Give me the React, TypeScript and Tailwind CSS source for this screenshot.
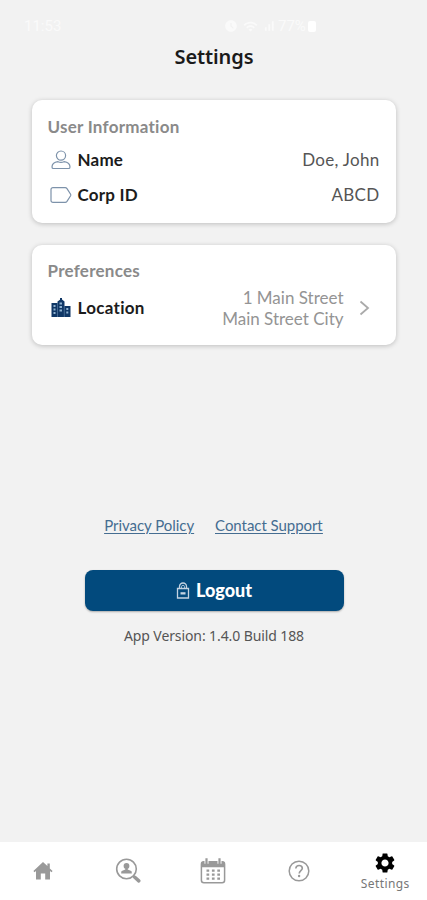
import type { ReactNode } from "react";
import { MdAccessTimeFilled, MdSettings, MdWifi, MdSignalCellularAlt } from "react-icons/md";

const UserIcon = () => (
  <svg width="22" height="22" viewBox="0 0 22 22" fill="none" stroke="#7d92aa" strokeWidth="1.2">
    <circle cx="11" cy="6.6" r="4.6" />
    <path d="M8 12.700c-3.700.6-6 2.300-6 5.200 0 1 .6 1.600 1.500 1.600h15c.9 0 1.500-.6 1.500-1.600 0-2.900-2.300-4.600-6-5.200-2 .9-4 .9-6 0Z" />
  </svg>
);

const TagIcon = () => (
  <svg width="22" height="22" viewBox="0 0 22 22" fill="none" stroke="#7d92aa" strokeWidth="1.2">
    <path d="M3 3.600h12.200c.8 0 1.300.3 1.800 1l3.600 5.600c.3.500.3 1 0 1.500L17 17.400c-.5.700-1 1-1.800 1H3c-1.200 0-2-.8-2-2V5.600c0-1.200.8-2 2-2Z" />
  </svg>
);

const BuildingIcon = () => (
  <svg width="22" height="22" viewBox="0 0 22 22">
    <path d="M1.500 6h6V4.500L10 2.800V1h2v1.500L14.500 4.500V9h6v11h-19V6Z" fill="#103766" />
    <path
      d="M3.500 9h2M3.500 12.500h2M3.500 16h2M9.500 6.500h2.500M9.500 10h2.500M9.500 13.500h2.500M16.300 12h2M16.300 15.500h2"
      stroke="#8fb2d0"
      strokeWidth="1.800"
    />
    <path d="M7.500 6v14M14.300 9v11" stroke="#6486ad" strokeWidth=".6" />
  </svg>
);

const LockIcon = () => (
  <svg width="14" height="18" viewBox="0 0 14 18" fill="none" stroke="#c3d3e2" strokeWidth="1.300">
    <path d="M1.500 6.500h11v9.500h-11zM3.500 6.500V4.500a3.500 3.500 0 0 1 7 0v2" />
    <path d="M5.500 6V4.800a1.500 1.500 0 0 1 3 0V6" strokeWidth=".8" />
    <path d="M4.500 10.200h5v2.300h-5z" fill="#c3d3e2" stroke="none" />
  </svg>
);

const HomeIcon = () => (
  <svg width="20" height="20" viewBox="0 0 20 20" fill="#999">
    <path d="M10 1 .4 10l1.100 1.200L3 10V18.500h4.800v-6h4.400v6H17V10l1.500 1.200L19.600 10 16.800 7.400V2.500h-2.400v2.600L10 1Z" />
  </svg>
);

const SearchUserIcon = () => (
  <svg width="26" height="26" viewBox="0 0 26 26" fill="none" stroke="#999">
    <circle cx="11.500" cy="11" r="9.800" strokeWidth="1.600" />
    <path d="m18.200 17.800 2.300 2.200" strokeWidth="2" />
    <path d="m19.800 19.300 4 3.600" strokeWidth="3.500" strokeLinecap="round" />
    <circle cx="11.500" cy="7.900" r="2.900" fill="#999" stroke="none" />
    <path d="M10.300 10h2.400v1.600l3.500 1.500c.5.300.6.800.6 2.400H6.200c0-1.600.1-2.100.6-2.400l3.500-1.500V10Z" fill="#999" stroke="none" />
  </svg>
);

const CalendarIcon = () => (
  <svg width="26" height="26" viewBox="0 0 26 26" fill="none" stroke="#999">
    <rect x="1.400" y="3.800" width="23.200" height="21" rx="2.500" strokeWidth="1.500" />
    <path d="M1 9.200V6c0-1.500 1-2.500 2.500-2.500h19C24 3.500 25 4.500 25 6v3.200H1Z" fill="#999" stroke="none" />
    <path d="M6.500 .8v5M19.500 .8v5" stroke="#fff" strokeWidth="4" />
    <path d="M6.500 .2v6M19.500 .2v6" strokeWidth="2.200" />
    <path d="M6.500 12.700h13.500M6.500 16.700h13.500M6.500 20.700h13.500" strokeWidth="2.200" strokeDasharray="2.700 2.700" />
  </svg>
);

const HelpIcon = () => (
  <svg width="22" height="22" viewBox="0 0 22 22" fill="none" stroke="#999">
    <circle cx="11" cy="11" r="9.800" strokeWidth="1.500" />
    <path d="M7.800 8.500c.2-2 1.400-3 3.300-3s3.200 1.100 3.200 2.700c0 2.300-3.100 2.500-3.100 5.300" strokeWidth="1.600" />
    <circle cx="11.100" cy="16" r="1.200" fill="#999" stroke="none" />
  </svg>
);

type RowProps = { icon: ReactNode; label: string; value: string };

const Row = ({ icon, label, value }: RowProps) => (
  <div className="flex h-[35px] items-center">
    {icon}
    <span className="ml-[6px] pt-px text-[17px] font-bold tracking-[0.2px] text-[#1c1c1c]">{label}</span>
    <span className="ml-auto pt-px text-[17px] tracking-[0.3px] text-[#555]">{value}</span>
  </div>
);

const App = () => {
  return (
    <div className="flex h-[900px] w-[427px] flex-col bg-[#f2f2f2] font-['Lato',sans-serif]">
      <header className="h-[100px] shrink-0">
        <div className="flex h-[42px] items-center pt-[10px] pl-[24px] font-['Roboto',sans-serif] text-[15px] text-[#fafafa]">
          <span className="w-[200px]">11:53</span>
          <MdAccessTimeFilled size={14} />
          <MdWifi size={15} className="ml-[5px]" />
          <MdSignalCellularAlt size={14} className="ml-1" />
          <span className="ml-[2px]">77%</span>
          <span className="ml-[2px] h-[11px] w-[8px] rounded-[2px] bg-white" />
        </div>
        <h1 className="pl-px text-center font-['Noto_Sans',sans-serif] text-[20px] leading-[29px] font-semibold tracking-[-0.1px] text-[#1a1a1a]">
          Settings
        </h1>
      </header>

      <main className="flex flex-1 flex-col items-center">
        <section className="h-[123px] w-[364px] rounded-[10px] bg-white px-4 pt-4 shadow-[0_1px_5px_rgba(0,0,0,0.22)]">
          <h2 className="text-[17px] leading-[22px] font-bold tracking-[0.25px] text-[#8a8a8a]">User Information</h2>
          <div className="mt-[4px] pl-[2px]">
            <Row icon={<UserIcon />} label="Name" value="Doe, John" />
            <Row icon={<TagIcon />} label="Corp ID" value="ABCD" />
          </div>
        </section>

        <section className="mt-[22px] h-[100px] w-[364px] rounded-[10px] bg-white px-4 pt-[15px] shadow-[0_1px_5px_rgba(0,0,0,0.22)]">
          <h2 className="text-[17px] leading-[22px] font-bold tracking-[0.25px] text-[#8a8a8a]">Preferences</h2>
          <div className="mt-[5px] flex items-center pl-[2px]">
            <BuildingIcon />
            <span className="ml-[6px] text-[17px] font-bold tracking-[0.3px] text-[#1c1c1c]">Location</span>
            <p className="ml-auto text-right text-[17px] leading-[21px] text-[#949494]">
              1 Main Street
              <br />
              Main Street City
            </p>
            <svg className="mr-[10px] ml-[15px]" width="11" height="16" viewBox="0 0 11 16" fill="none" stroke="#aaa" strokeWidth="1.800">
              <path d="m1.500 1.500 7.500 6.500-7.500 6.500" />
            </svg>
          </div>
        </section>

        <div className="mt-[170px] flex gap-[21px] text-[15px] leading-[20px] tracking-[-0.05px] text-[#456d91] underline underline-offset-2">
          <a href="#">Privacy Policy</a>
          <a href="#">Contact Support</a>
        </div>
        <button className="mt-[35px] ml-px flex h-[41px] w-[259px] items-center justify-center gap-[6px] rounded-[8px] bg-[#024a7d] text-[18px] font-black text-white shadow-[0_1px_2px_rgba(0,0,0,0.3)]">
          <LockIcon />
          Logout
        </button>
        <p className="mt-[15px] ml-px font-['Noto_Sans',sans-serif] text-[14px] leading-[20px] tracking-[-0.1px] text-[#555]">
          App Version: 1.4.0 Build 188
        </p>
      </main>

      <nav className="grid h-[58px] shrink-0 grid-cols-5 items-center bg-white">
        <span className="flex justify-center">
          <HomeIcon />
        </span>
        <span className="flex justify-center">
          <SearchUserIcon />
        </span>
        <span className="flex justify-center">
          <CalendarIcon />
        </span>
        <span className="flex justify-center">
          <HelpIcon />
        </span>
        <span className="flex flex-col items-center pl-[2px] text-black">
          <MdSettings size={24} />
          <span className="mt-px font-['Noto_Sans',sans-serif] text-[12px] leading-[16px] tracking-[0.4px] text-[#777]">Settings</span>
        </span>
      </nav>
    </div>
  );
};

export default App;
